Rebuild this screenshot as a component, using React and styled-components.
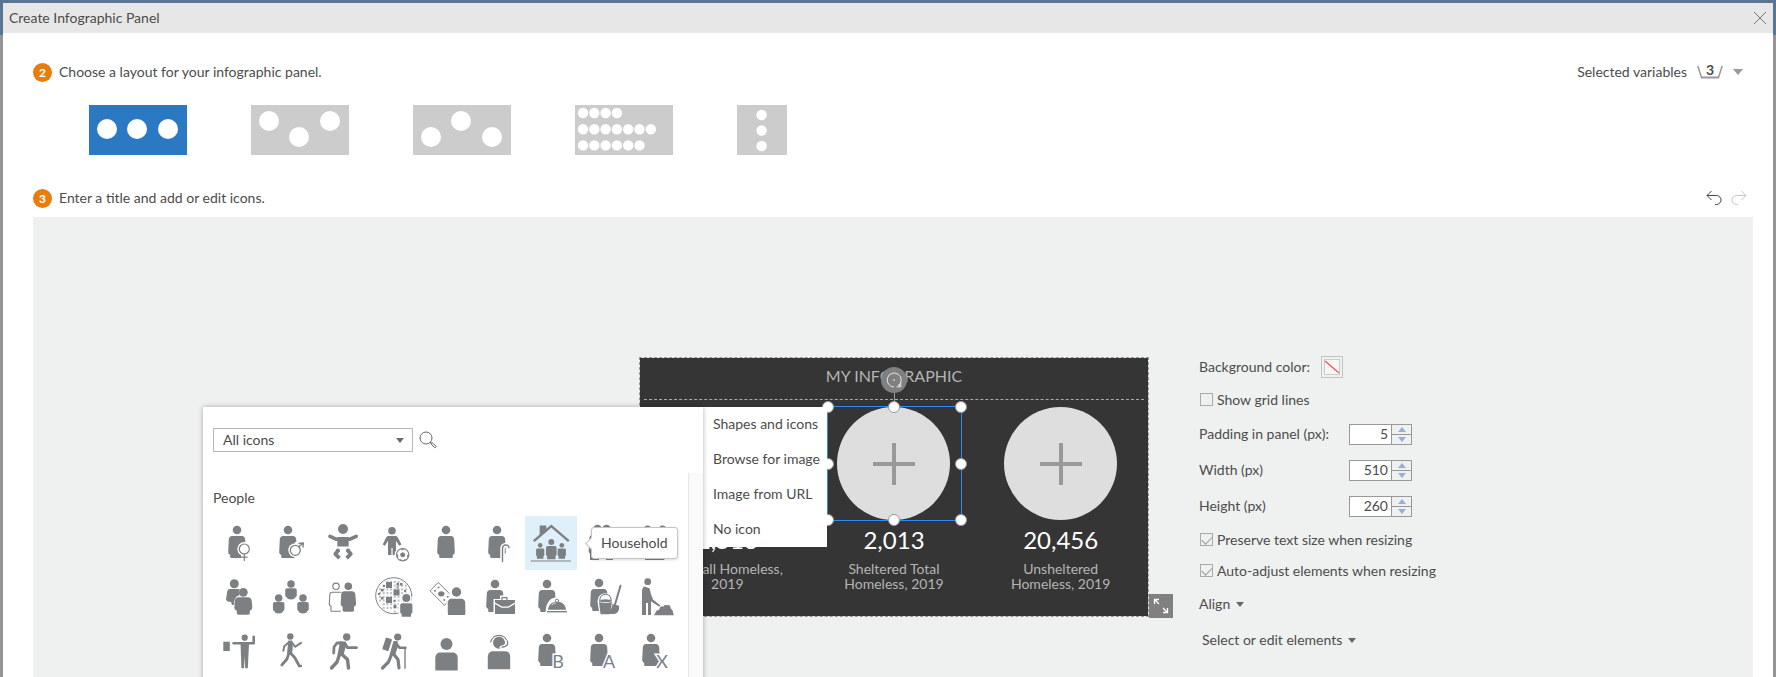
import React, { useState } from "react";
import styled, { createGlobalStyle, css } from "styled-components";

const layouts = [
  { id: "row", name: "Row", width: 98, r: 10, dots: [[18, 24], [48, 24], [79, 24]] },
  { id: "down", name: "Middle down", width: 98, r: 10, dots: [[18, 16], [48, 32], [79, 16]] },
  { id: "up", name: "Middle up", width: 98, r: 10, dots: [[18, 32], [48, 16], [79, 32]] },
  {
    id: "bars",
    name: "Bars",
    width: 98,
    r: 5.2,
    dots: [4, 7, 6].flatMap((n, row) =>
      Array.from({ length: n }, (_, i) => [8 + i * 11.3, 8 + row * 16.2])
    ),
  },
  { id: "column", name: "Column", width: 50, r: 5.2, dots: [[24.6, 10], [24.6, 25.5], [24.6, 41]] },
];

const stats = [
  { value: "2,513", label: "Overall Homeless, 2019" },
  { value: "2,013", label: "Sheltered Total Homeless, 2019", selected: true },
  { value: "20,456", label: "Unsheltered Homeless, 2019" },
];

const handles = [
  [0, 0], [50, 0], [100, 0],
  [0, 50], [100, 50],
  [0, 100], [50, 100], [100, 100],
];

// ---- people icons, each on a 52 x 54 cell ----

const Adult = ({ x = 25, y = 14 }) => (
  <g transform={`translate(${x} ${y})`}>
    <circle r="4.3" />
    <path d="M-5 6h10c1.900 0 3 1.500 3.200 3.300l.6 12.700c0 1.600-.7 2.500-2 2.700V27c0 .7-.5 1-1.200 1h-11.200c-.7 0-1.200-.3-1.200-1v-2.300c-1.300-.2-2-1.100-2-2.700l.6-12.700C-8 7.500-6.900 6-5 6z" />
  </g>
);

const Bust = ({ x, y, s = 1 }) => (
  <g transform={`translate(${x} ${y}) scale(${s})`}>
    <circle r="3.9" />
    <path d="M-4 4.400h8c1.200 0 2 .8 2 2v5c0 1.300-.6 2-1.500 2.500-.6 1.500-2 2.300-4.500 2.300s-3.900-.8-4.500-2.300c-.9-.5-1.500-1.200-1.500-2.500v-5c0-1.200.8-2 2-2z" />
  </g>
);

const Small = ({ x, y, s = 1 }) => (
  <g transform={`translate(${x} ${y}) scale(${s})`}>
    <circle r="3" />
    <path d="M-3.500 4h7c1.200 0 1.800.8 1.800 2v6.500c0 .8-.4 1.300-1.100 1.500v3.300h-8.400V14c-.7-.2-1.100-.7-1.100-1.500V6c0-1.200.6-2 1.800-2z" />
  </g>
);

const Worker = ({ x, y, s = 1 }) => (
  <g transform={`translate(${x} ${y}) scale(${s})`}>
    <circle r="6" />
    <path d="M-6 8.500H6c3.500 0 5.200 2.500 5.200 5.500v12.500h-22.400V14c0-3 1.700-5.500 5.200-5.500z" />
  </g>
);

const Letter = ({ children, x }) => (
  <text
    x={x}
    y="44"
    fontSize="18"
    textAnchor="middle"
    stroke="#fff"
    strokeWidth="3"
    paintOrder="stroke"
  >
    {children}
  </text>
);

const line = { fill: "none", stroke: "currentColor", strokeLinecap: "round", strokeLinejoin: "round" };
const halo = { fill: "#fff", stroke: "#fff", strokeWidth: 3, strokeLinejoin: "round" };

const diversity = [
  [18, 12, 6], [25.500, 19.500, 6], [18, 27, 6], [28.500, 13, 2.500], [32, 13, 2.500], [28.500, 16.500, 2],
  [13, 19, 2.500], [10, 23, 2], [13, 27, 2.500], [25.500, 30, 2], [25.500, 35, 3], [36, 20, 2], [15, 15, 2],
];
const mesh = [];
for (let gx = 10; gx < 40; gx += 3.700) {
  for (let gy = 11; gy < 42; gy += 3.700) {
    if (Math.hypot(gx + 1 - 24.700, gy + 1 - 25.700) < 16) mesh.push([gx, gy]);
  }
}

const icons = [
  {
    name: "Female",
    art: (
      <>
        <Adult x={24} />
        <circle cx="31.3" cy="33" r="7" fill="#fff" />
        <path d="M28 36h7v10h-7z" fill="#fff" />
        <g {...line} strokeWidth="1.2">
          <circle cx="31.3" cy="33" r="5" />
          <path d="M31.300 38v6.500M28.500 41.200h5.600" />
        </g>
      </>
    ),
  },
  {
    name: "Male",
    art: (
      <>
        <Adult x={23} />
        <circle cx="30.3" cy="34.3" r="7" fill="#fff" />
        <path d="M30 26h6v10h-6z" fill="#fff" />
        <g {...line} strokeWidth="1.3">
          <circle cx="30.3" cy="34.3" r="5" />
          <path d="M34 30.700l4-3.500M34 27.500l4.400-.6-.4 4.300" />
        </g>
      </>
    ),
  },
  {
    name: "Infant",
    art: (
      <>
        <circle cx="26" cy="13" r="5" />
        <path d="M20.300 21h11.400v9.500H20.300z" />
        <path d="M13 20.300l6.500 3h13l6.700-3" {...line} strokeWidth="3.600" />
        <path d="M21.500 34l-3.200 4 4.200 4.200M30.500 34l3.300 4-4.200 4.200" {...line} strokeWidth="3.800" strokeLinecap="butt" />
        <circle cx="21" cy="34.500" r="2" />
        <circle cx="31" cy="34.500" r="2" />
      </>
    ),
  },
  {
    name: "Child",
    art: (
      <>
        <circle cx="23" cy="14.700" r="3.800" />
        <path d="M19.500 20h7c1 0 1.800.5 2.300 1.500l3.700 7-2.300 1.300-3.200-5V39h-3.400v-7h-1.200v7H19V24.800l-3 5-2.300-1.300 3.500-7c.5-1 1.300-1.500 2.300-1.500z" />
        <circle cx="33.700" cy="38.700" r="8" fill="#fff" />
        <circle cx="33.700" cy="38.700" r="6.200" {...line} strokeWidth="1.200" />
        <path d="M33.700 36l2.700 2-1 3.100h-3.400l-1-3.100z" />
        <path d="M31 32.800l2.700 1.400 2.700-1.400zM27.700 37.500l1.800 2.200-1 2.700zM39.700 37.500l-1.800 2.200 1 2.700zM30 44l2.300-1 .7 1.900zM37.400 44l-2.300-1-.7 1.900z" />
      </>
    ),
  },
  { name: "Adult", art: <Adult x={25} /> },
  {
    name: "Senior",
    art: (
      <>
        <Adult x={24} />
        <path d="M29.500 46V32.500c0-4.500 6.500-4.500 6.500-.5" {...line} stroke="#fff" strokeWidth="4.500" />
        <path d="M29.500 45.500V32.500c0-4.500 6.500-4.500 6.500-.7" {...line} strokeWidth="1.400" />
      </>
    ),
  },
  {
    name: "Household",
    art: (
      <>
        <path d="M14.700 9.500h6.600v5.200l-6.600 5.800z" />
        <path d="M8.800 25.200L26.300 10l17.500 15.200" {...line} strokeWidth="2.400" strokeLinecap="butt" strokeLinejoin="miter" />
        <Small x={15.200} y={29.300} s={0.780} />
        <Small x={36.800} y={29.300} s={0.780} />
        <Small x={26.300} y={26} />
        <path d="M5.700 44.500h40.300v1.100H5.700z" />
      </>
    ),
  },
  {
    name: "Couple",
    art: (
      <>
        <Adult x={20.500} y={13} />
        <Adult x={29.500} y={13} />
        <path d="M13 36h9v8h-9zM29 36h7v8h-7z" />
      </>
    ),
  },
  {
    name: "Pair",
    art: (
      <>
        <Small x={18.500} y={13} s={1.200} />
        <Small x={33.500} y={13} s={1.200} />
        <path d="M16 42.800h19.300v1.200H16z" />
      </>
    ),
  },
  {
    name: "Adults",
    art: (
      <>
        <circle cx="21.300" cy="13.700" r="4.500" />
        <path d="M17 19h9c2 0 3 1 3 3l-6 13h-4l-1-3c-3 0-5-1-5-3l1-6c.3-2.500 1-4 3-4z" />
        <g transform="translate(30.300 22.300)">
          <path d="M0-5.500a5 5 0 0 1 4 8.500c4 0 6 3 6 7l-1 12h-16l-2.500-6c0-8 1-12 6-13A5.500 5.500 0 0 1 0-5.500z" fill="#fff" />
          <circle r="4.400" />
          <path d="M-4.500 5h9c2.500 0 3.700 1.500 4 4l.5 6c0 2-1 3-2.500 3.200V21c0 1-.6 1.400-1.500 1.400H-5c-.9 0-1.500-.4-1.500-1.400v-2.800C-8 18-9 17-9 15l.5-6c.3-2.500 1.500-4 4-4z" />
        </g>
      </>
    ),
  },
  {
    name: "Group",
    art: (
      <>
        <Bust x={26} y={14} s={0.960} />
        <Bust x={13.700} y={27.900} s={0.960} />
        <Bust x={38} y={27.900} s={0.960} />
      </>
    ),
  },
  {
    name: "Partners",
    art: (
      <>
        <circle cx="19" cy="16.300" r="3.200" {...line} strokeWidth="1.200" />
        <path d="M24 22.300h-9c-1.500 0-2 1-2.200 2.500l-.5 9c0 1.500.5 2.200 1.700 2.200v5.300h9.500" {...line} strokeWidth="1.100" />
        <circle cx="31.300" cy="16.300" r="3.800" />
        <path d="M27.500 21.300H35c2 0 3 1 3.300 3l.8 9c0 2-.6 3-2.100 3.200V40c0 1-.5 1.700-1.500 1.700h-8.400c-1 0-1.500-.7-1.500-1.700v-3.500c-1.300-.2-1.900-1.200-1.900-3.200l.5-9c.2-2 1.300-3 3.300-3z" />
      </>
    ),
  },
  {
    name: "Diversity",
    art: (
      <>
        <circle cx="24.700" cy="25.700" r="18" {...line} strokeWidth="1" />
        {mesh.map(([x, y]) => (
          <rect key={`${x} ${y}`} x={x} y={y} width="2" height="2" opacity="0.500" />
        ))}
        {diversity.map(([x, y, s]) => (
          <rect key={`${x} ${y}`} x={x - 1} y={y} width={s} height={s} />
        ))}
        <path d="M37.300 22.500c3 0 5.500 2.500 5.500 5.500 0 1.500-.4 2.500-1 3.500l3.500 3V48H29.500V34l3.300-2.500c-2.500-4 .5-9 4.500-9z" fill="#fff" />
        <circle cx="37.300" cy="28" r="4" />
        <path d="M33.500 33.300h7.600c1.500 0 2.300.8 2.300 2.300V42c0 1-.6 1.500-1.400 1.700v3h-9.400v-3c-.8-.2-1.400-.7-1.400-1.700v-6.400c0-1.500.8-2.300 2.300-2.300z" />
      </>
    ),
  },
  {
    name: "Income",
    art: (
      <>
        <path d="M17.300 12.500L9 20.800l14.500 14.500 8.300-8.300z" {...line} strokeWidth="1" strokeDasharray="3 .6" />
        <ellipse cx="20.300" cy="23.800" rx="3.200" ry="2.600" />
        <circle cx="14" cy="20.800" r="1" />
        <circle cx="17.500" cy="17.500" r="1" />
        <circle cx="23.200" cy="30" r="1" />
        <circle cx="26.700" cy="26.700" r="1" />
        <path d="M35.300 15c4 0 7 3 7 6.700 0 8-3 6-7 6l-10 20V33l5-4c-4-7-1-14 5-14z" fill="#fff" />
        <Worker x={35.500} y={22} s={0.780} />
        <path d="M27 40h17.200v5H27z" />
      </>
    ),
  },
  {
    name: "Employee",
    art: (
      <>
        <Adult x={22} y={14} />
        <path d="M20.500 29h23v17h-23zM27 25.500h9v6h-9z" fill="#fff" />
        <path d="M29 30v-2.300h5V30" {...line} strokeWidth="1.200" />
        <path d="M22 30h20v2.500l-7 4h-6l-7-4z" />
        <path d="M22 34l6.500 3.700h7L42 34v10H22z" />
      </>
    ),
  },
  {
    name: "Hospitality",
    art: (
      <>
        <Adult x={22} y={14} />
        <path d="M20.500 44c0-11 4-16.500 11.500-16.500S43 33 43 44z" fill="#fff" />
        <path d="M23 39.700c.5-5 3.500-8 9-8s8.500 3 9 8z" />
        <circle cx="32" cy="30.800" r="1.700" {...line} strokeWidth="1" />
        <path d="M27 35c1-1.300 2-1.800 3.500-2" {...line} stroke="#fff" strokeWidth=".8" />
        <path d="M22 41h20v1.400H22z" />
      </>
    ),
  },
  {
    name: "Cleaning",
    art: (
      <>
        <Adult x={22} y={13} />
        <path d="M22 31.500c0-9 12.500-9 12.500 0L33 44h-9z" {...halo} />
        <path d="M37.800 35L44 15.800" {...line} stroke="#fff" strokeWidth="4" />
        <path d="M22 31.500l1.500 12.700h8.500l1.500-3 1.500-9.700c-4 2-9 2-13 0z" />
        <path d="M22.700 31c0-9 11.500-9 11.500 0" {...line} strokeWidth="1.200" />
        <ellipse cx="28.500" cy="30.800" rx="5.500" ry="1.500" />
        <path d="M38 34.500l5.500-18.700" {...line} strokeWidth="2" />
        <path d="M35.500 34l6.500 1.700c.8 4.300-1.500 8.300-5 8.300h-8c4-1.500 5.500-5 6.500-10z" />
      </>
    ),
  },
  {
    name: "Laborer",
    art: (
      <>
        <circle cx="18.700" cy="11.700" r="3.400" />
        <path d="M15 16.500l5.500 1.700 1.500 6 2 5.300 7.200 5.800-1 1.500-8.200-5.500V45h-3V33h-2v12h-4V22c0-2.500.3-4 2-5.500z" />
        <path d="M25 45.300l2.500-4.500 2.500-1 1.500-3.300h3l1.200-1.500 5 .3 1.300 3.500 1.500 1.500 1.300 5z" />
      </>
    ),
  },
  {
    name: "Voter",
    art: (
      <>
        <path d="M10.300 17.700h6.500V27h-6.500z" />
        <circle cx="31.700" cy="13.700" r="3.100" />
        <path d="M20.500 19.300h20.200v-6.500" {...line} strokeWidth="2.600" />
        <path d="M27.500 18.500h8.600L34.800 44.300h-2.600l-.6-12-.6 12h-2.600z" />
      </>
    ),
  },
  {
    name: "Walking",
    art: (
      <>
        <circle cx="25.300" cy="12.500" r="3.200" />
        <path d="M23.300 16.500h4l.5 7-.8 6.500h-5z" />
        <path d="M23.500 18.500l-4.200 3.800-1 4.500M27 18.500l3 4.300 6-4" {...line} strokeWidth="2" />
        <path d="M24 29l-2 6-5.200 6M25.500 29l4.500 5 4.300 8h1.500" {...line} strokeWidth="2.700" />
      </>
    ),
  },
  {
    name: "Running",
    art: (
      <>
        <circle cx="29.700" cy="13" r="3.700" />
        <path d="M23 17.500h5.500l.5 4-2.500 9.500h-6z" />
        <path d="M25 19h-5l-3 4-.3 6M28 19.500l2.500 4.200h9" {...line} strokeWidth="2.800" />
        <path d="M22.500 30.500L20 38l-5.500 6M24.500 30l6 5.500 1 8.500" {...line} strokeWidth="3.400" />
      </>
    ),
  },
  {
    name: "Hiking",
    art: (
      <>
        <circle cx="28.700" cy="13" r="3.600" />
        <rect x="15" y="14" width="6.500" height="12.500" rx="1" transform="rotate(18 18 20)" />
        <path d="M24.500 17h4l.7 4.500-3 9.500h-5.700z" />
        <path d="M27.500 19.500l3 4.300h6" {...line} strokeWidth="2.500" />
        <path d="M22.500 30.500L19.500 38 13.500 44M24.500 30l4.500 5.500 1 8.500" {...line} strokeWidth="3.200" />
        <path d="M36 23.500v20.800" {...line} strokeWidth="1.400" />
      </>
    ),
  },
  { name: "Person", art: <Worker x={25.500} y={20} /> },
  {
    name: "Support",
    art: (
      <>
        <Worker x={26} y={18.800} />
        <path d="M17.700 18a8.500 8.500 0 0 1 16.600 0" {...line} strokeWidth="1.200" />
        <path d="M34.500 17v4l-6.500 2.500" {...line} stroke="#fff" strokeWidth="3" />
        <path d="M34.500 17v3.500c-1 1.800-3 2.500-5.500 2.700" {...line} strokeWidth="1.300" />
      </>
    ),
  },
  { name: "Type B", art: <><Adult x={22} /><Letter x={33}>B</Letter></> },
  { name: "Type A", art: <><Adult x={22} /><Letter x={32}>A</Letter></> },
  { name: "Type X", art: <><Adult x={22} /><Letter x={33}>X</Letter></> },
];

const NumberField = ({ id, label, value }) => (
  <Row $height={36}>
    <FieldLabel htmlFor={id}>{label}</FieldLabel>
    <Stepper>
      <StepperInput id={id} type="text" defaultValue={value} />
      <StepperButtons>
        <StepButton type="button" aria-label="Increase">
          <Caret $up $size={4} $color="#9aaed6" />
        </StepButton>
        <StepButton type="button" aria-label="Decrease">
          <Caret $size={4} $color="#9aaed6" />
        </StepButton>
      </StepperButtons>
    </Stepper>
  </Row>
);

const Check = ({ children, height, checked }) => (
  <Row $height={height}>
    <CheckLabel>
      <CheckInput type="checkbox" defaultChecked={checked} />
      {children}
    </CheckLabel>
  </Row>
);

const Selection = () => (
  <SelectionBox>
    <RotateStem />
    <RotateHandle type="button" aria-label="Rotate">
      <svg width="26" height="26" viewBox="0 0 26 26" fill="none" stroke="#e6e6e6">
        <path d="M17.500 18.500a7 7 0 1 0-4.500 1.500" />
        <path d="M19.800 15.500v4.300h-4.300M19.800 19.800l-2.300-2.300" />
        <circle cx="13" cy="13" r=".5" />
      </svg>
    </RotateHandle>
    {handles.map(([x, y]) => (
      <Handle key={`${x}-${y}`} $x={x} $y={y} />
    ))}
  </SelectionBox>
);

const IconPicker = () => (
  <Picker>
    <PickerHead>
      <PickerSelectWrap>
        <PickerSelect aria-label="Icon category" defaultValue="all">
          <option value="all">All icons</option>
          <option value="people">People</option>
        </PickerSelect>
        <Caret $size={4} $color="#6b6b6b" />
      </PickerSelectWrap>
      <IconButton type="button" aria-label="Search">
        <svg width="18" height="18" viewBox="0 0 18 18" fill="none" stroke="#666">
          <circle cx="7" cy="7" r="6" />
          <path d="M11 11l1.500 1.500M13 11.500l4 3.700c.6.600-.8 2-1.500 1.400l-3.700-4z" />
        </svg>
      </IconButton>
    </PickerHead>
    <PickerBody>
      <PickerList>
        <GroupTitle>People</GroupTitle>
        <IconGrid>
          {icons.map(({ name, art }) => (
            <IconCell key={name} type="button" aria-label={name} $active={name === "Household"}>
              <svg width="52" height="54" viewBox="0 0 52 54" fill="currentColor">
                {art}
              </svg>
              {name === "Household" && <Tooltip>{name}</Tooltip>}
            </IconCell>
          ))}
        </IconGrid>
      </PickerList>
      <ScrollTrack />
    </PickerBody>
  </Picker>
);

const App = () => {
  const [layout, setLayout] = useState("row");

  return (
    <Backdrop>
      <GlobalStyle />
      <Dialog role="dialog" aria-label="Create Infographic Panel">
        <TitleBar>
          <DialogTitle>Create Infographic Panel</DialogTitle>
          <IconButton type="button" aria-label="Close">
            <svg width="14" height="14" viewBox="0 0 14 14" stroke="#777" fill="none">
              <path d="M1 1l12 12M13 1L1 13" />
            </svg>
          </IconButton>
        </TitleBar>
        <Content>
          <StepHead>
            <Badge>2</Badge>
            <StepText>Choose a layout for your infographic panel.</StepText>
            <Variables type="button">
              Selected variables
              <Basket>
                <svg width="26" height="14" viewBox="0 0 26 14" fill="none" stroke="#999">
                  <path d="M.8 1l3.700 11.500M25.200 1l-3.700 11.500" strokeWidth="1.500" />
                  <path d="M4 12.500h18" strokeWidth="2" />
                </svg>
                <Count>3</Count>
              </Basket>
              <Caret $size={5} $color="#999" />
            </Variables>
          </StepHead>
          <Layouts>
            {layouts.map(({ id, name, width, r, dots }) => (
              <LayoutButton
                key={id}
                type="button"
                aria-label={name}
                $active={id === layout}
                onClick={() => setLayout(id)}
              >
                <svg width={width} height="50" fill="#fff">
                  {dots.map(([x, y]) => (
                    <circle key={`${x}-${y}`} cx={x} cy={y} r={r} />
                  ))}
                </svg>
              </LayoutButton>
            ))}
          </Layouts>
          <StepHead>
            <Badge>3</Badge>
            <StepText>Enter a title and add or edit icons.</StepText>
            <History>
              <IconButton type="button" aria-label="Undo">
                <svg width="16" height="16" viewBox="0 0 16 16" fill="none" stroke="#444">
                  <path d="M5.500 1L1 5.500 5.500 10M1 5.500h9.500a4.500 4.500 0 0 1 0 9H9" />
                </svg>
              </IconButton>
              <IconButton type="button" aria-label="Redo">
                <svg width="16" height="16" viewBox="0 0 16 16" fill="none" stroke="#c4c4c4">
                  <path d="M10.500 1L15 5.500 10.500 10M15 5.500H5.500a4.500 4.500 0 0 0 0 9H7" />
                </svg>
              </IconButton>
            </History>
          </StepHead>
          <Canvas>
            <Infographic>
              <InfographicTitle>MY INFOGRAPHIC</InfographicTitle>
              <Stats>
                {stats.map(({ value, label, selected }) => (
                  <Stat key={label}>
                    <Placeholder type="button" aria-label="Add icon">
                      <svg width="42" height="42" viewBox="0 0 42 42">
                        <path d="M21 0v42M0 21h42" stroke="#999" strokeWidth="4" />
                      </svg>
                    </Placeholder>
                    <Value>{value}</Value>
                    <Label>{label}</Label>
                    {selected && <Selection />}
                  </Stat>
                ))}
              </Stats>
              <ResizeButton type="button" aria-label="Resize">
                <svg width="24" height="24" viewBox="0 0 24 24" fill="none" stroke="#fff" strokeWidth="1.300">
                  <path d="M5.500 10V5.500H10M5.500 5.500L10 10M18.500 14v4.500H14M18.500 18.500L14 14" />
                </svg>
              </ResizeButton>
              <Popups>
                <IconPicker />
                <Menu>
                  <MenuItem type="button">Shapes and icons</MenuItem>
                  <MenuItem type="button">Browse for image</MenuItem>
                  <MenuItem type="button">Image from URL</MenuItem>
                  <MenuItem type="button">No icon</MenuItem>
                </Menu>
              </Popups>
            </Infographic>
            <Settings>
              <Row $height={33}>
                Background color:
                <Swatch type="button" aria-label="Background color">
                  <svg width="16" height="16" viewBox="0 0 16 16" fill="none">
                    <rect x=".5" y=".5" width="15" height="15" stroke="#ccc" fill="#f7f7f7" />
                    <path d="M1 2l14 12" stroke="#f0525f" strokeWidth="1.300" />
                  </svg>
                </Swatch>
              </Row>
              <Check height={33}>Show grid lines</Check>
              <NumberField id="padding" label="Padding in panel (px):" value="5" />
              <NumberField id="width" label="Width (px)" value="510" />
              <NumberField id="height" label="Height (px)" value="260" />
              <Check height={31} checked>Preserve text size when resizing</Check>
              <Check height={31} checked>Auto-adjust elements when resizing</Check>
              <Row $height={36}>
                <DropButton type="button">
                  Align <Caret $size={4} $color="#666" />
                </DropButton>
              </Row>
              <Row $height={36} $indent>
                <DropButton type="button">
                  Select or edit elements <Caret $size={4} $color="#666" />
                </DropButton>
              </Row>
            </Settings>
          </Canvas>
        </Content>
      </Dialog>
    </Backdrop>
  );
};

export default App;

const GlobalStyle = createGlobalStyle`
  * {
    box-sizing: border-box;
  }
  body {
    margin: 0;
    font-family: Lato, "Liberation Sans", sans-serif;
    font-size: 14px;
    line-height: 20px;
    color: #4c4c4c;
  }
  button, input, select {
    font: inherit;
    color: inherit;
  }
  button {
    padding: 0;
    border: 0;
    background: none;
    cursor: pointer;
  }
  svg {
    display: block;
  }
`;

const Backdrop = styled.div`
  display: flex;
  height: 100vh;
  overflow: hidden;
  padding: 3px 3px 0;
  background: linear-gradient(#587593 35px, #949494 35px);
`;
const Dialog = styled.div`
  flex: 1;
  min-width: 0;
  display: flex;
  flex-direction: column;
  background: #fff;
`;
const TitleBar = styled.header`
  display: flex;
  align-items: center;
  justify-content: space-between;
  height: 30px;
  padding: 0 6px;
  background: #e7e7e7;
`;
const DialogTitle = styled.h1`
  margin: 0;
  font-size: 14px;
  font-weight: 400;
`;
const IconButton = styled.button`
  display: flex;
`;
const Content = styled.main`
  flex: 1;
  min-height: 0;
  display: flex;
  flex-direction: column;
  padding: 29px 20px 0 30px;
`;
const StepHead = styled.div`
  display: flex;
  align-items: center;
  height: 20px;
`;
const Badge = styled.span`
  width: 19px;
  height: 19px;
  margin-right: 7px;
  border-radius: 50%;
  background: #e87d0d;
  color: #fff;
  font-size: 12px;
  font-weight: 700;
  line-height: 19px;
  text-align: center;
`;
const StepText = styled.h2`
  flex: 1;
  margin: 0;
  font-size: 14px;
  font-weight: 400;
`;
const Caret = styled.span`
  width: 0;
  height: 0;
  border: ${({ $size }) => $size}px solid transparent;
  ${({ $up, $size, $color }) =>
    $up
      ? css`
          border-top: 0;
          border-bottom: ${$size + 1}px solid ${$color};
        `
      : css`
          border-bottom: 0;
          border-top: ${$size + 1}px solid ${$color};
        `}
`;
const Variables = styled.button`
  display: flex;
  align-items: center;
  gap: 10px;
  padding-right: 10px;
`;
const Basket = styled.span`
  display: grid;
  place-items: center;

  & > * {
    grid-area: 1 / 1;
  }
`;
const Count = styled.span`
  padding-bottom: 4px;
  font-weight: 700;
  line-height: 16px;
`;
const Layouts = styled.div`
  display: flex;
  gap: 64px;
  padding: 23px 56px 33px;
`;
const LayoutButton = styled.button`
  background: ${({ $active }) => ($active ? "#2a79c2" : "#ccc")};
`;
const History = styled.div`
  display: flex;
  gap: 9px;
  padding-right: 6px;
`;
const Canvas = styled.section`
  flex: 1;
  min-height: 0;
  display: grid;
  grid-template-columns: 1fr auto 1fr;
  align-items: start;
  margin-top: 9px;
  padding: 133px 0 0 2px;
  background: #eff1f1;
`;
const Infographic = styled.div`
  position: relative;
  grid-column: 2;
  width: 510px;
  min-height: 260px;
  margin-top: 7px;
  padding: 0 4px;
  border: 1px dashed #999;
  background: #353535;
  background-clip: padding-box;
`;
const InfographicTitle = styled.h3`
  margin: 0;
  padding: 8px 0 13px;
  border-bottom: 1px dashed #aaa;
  color: #b4b4b4;
  font-size: 16px;
  font-weight: 400;
  text-align: center;
`;
const Stats = styled.div`
  display: grid;
  grid-template-columns: repeat(3, 1fr);
  padding-top: 7px;
`;
const Stat = styled.div`
  position: relative;
  display: flex;
  flex-direction: column;
  align-items: center;
  text-align: center;
`;
const Placeholder = styled.button`
  display: grid;
  place-items: center;
  width: 113px;
  height: 113px;
  border-radius: 50%;
  background: #dedede;
`;
const Value = styled.div`
  padding: 5px 0 6px;
  color: #fff;
  font-size: 24px;
  line-height: 30px;
`;
const Label = styled.div`
  width: 120px;
  color: #b4b4b4;
  line-height: 15px;
`;
const SelectionBox = styled.div`
  position: absolute;
  top: -1px;
  left: 50%;
  width: 135px;
  height: 115px;
  margin-left: -67px;
  border: 1px solid #3089f5;
  pointer-events: none;
`;
const Handle = styled.span`
  position: absolute;
  left: ${({ $x }) => $x}%;
  top: ${({ $y }) => $y}%;
  width: 12px;
  height: 12px;
  border: 1px solid #999;
  border-radius: 50%;
  background: #fff;
  transform: translate(-50%, -50%);
`;
const RotateStem = styled.span`
  position: absolute;
  left: 50%;
  bottom: 100%;
  width: 1px;
  height: 15px;
  background: #999;
`;
const RotateHandle = styled.button`
  position: absolute;
  left: 50%;
  top: -40px;
  margin-left: -13px;
  border-radius: 50%;
  background: #808080;
`;
const ResizeButton = styled.button`
  position: absolute;
  left: 100%;
  bottom: -2px;
  margin-left: 1px;
  background: #808080;
`;
const Popups = styled.div`
  position: absolute;
  top: 49px;
  right: 321px;
  display: flex;
  align-items: flex-start;
`;
const Picker = styled.div`
  position: relative;
  z-index: 2;
  width: 500px;
  background: #fff;
  box-shadow: 0 0 5px rgba(0, 0, 0, 0.3);
`;
const PickerHead = styled.div`
  display: flex;
  align-items: center;
  gap: 6px;
  padding: 21px 10px;
`;
const PickerSelectWrap = styled.div`
  display: grid;
  grid-template-columns: 1fr 16px;
  align-items: center;
  width: 200px;
  border: 1px solid #b8b8b8;

  & > * {
    grid-row: 1;
  }
  & > span {
    grid-column: 2;
    pointer-events: none;
  }
`;
const PickerSelect = styled.select`
  grid-column: 1 / 3;
  height: 22px;
  padding: 0 9px;
  border: 0;
  background: transparent;
  appearance: none;
`;
const PickerBody = styled.div`
  display: flex;
`;
const PickerList = styled.div`
  flex: 1;
  padding: 15px 6px 40px 10px;
`;
const ScrollTrack = styled.div`
  width: 15px;
  border-left: 1px solid #e6e6e6;
  background: #fafafa;
`;
const GroupTitle = styled.h4`
  margin: 0 0 8px;
  font-size: 14px;
  font-weight: 400;
`;
const IconGrid = styled.div`
  display: grid;
  grid-template-columns: repeat(9, 52px);
`;
const IconCell = styled.button`
  position: relative;
  color: #7d8083;
  background: ${({ $active }) => ($active ? "#dff0fb" : "none")};
`;
const Tooltip = styled.span`
  position: absolute;
  z-index: 1;
  top: 11px;
  left: 66px;
  padding: 5px 9px;
  border: 1px solid #c4c4c4;
  border-radius: 3px;
  background: #fff;
  color: #4c4c4c;
  box-shadow: 0 1px 3px rgba(0, 0, 0, 0.15);

  &::before {
    content: "";
    position: absolute;
    top: 11px;
    left: -5px;
    width: 8px;
    height: 8px;
    border: 1px solid #c4c4c4;
    border-width: 0 0 1px 1px;
    background: #fff;
    transform: rotate(45deg);
  }
`;
const Menu = styled.div`
  display: flex;
  flex-direction: column;
  width: 124px;
  background: #fff;
  z-index: 1;
`;
const MenuItem = styled.button`
  height: 35px;
  padding: 0 0 2px 10px;
  text-align: left;
  white-space: nowrap;
`;
const Settings = styled.div`
  padding-left: 50px;
`;
const Row = styled.div`
  display: flex;
  align-items: center;
  height: ${({ $height }) => $height}px;
  padding-left: ${({ $indent }) => ($indent ? 3 : 0)}px;
`;
const Swatch = styled.button`
  margin-left: 11px;
  padding: 2px;
  border: 1px solid #c4c4c4;
`;
const FieldLabel = styled.label`
  width: 150px;
`;
const Stepper = styled.div`
  display: flex;
  border: 1px solid #999;
`;
const StepperInput = styled.input`
  width: 41px;
  height: 19px;
  padding: 0 3px;
  border: 0;
  background: #fff;
  text-align: right;
`;
const StepperButtons = styled.div`
  display: flex;
  flex-direction: column;
  width: 20px;
  border-left: 1px solid #999;
`;
const StepButton = styled.button`
  flex: 1;
  display: grid;
  place-items: center;

  & + & {
    border-top: 1px solid #999;
  }
`;
const CheckLabel = styled.label`
  display: flex;
  align-items: center;
  gap: 4px;
`;
const CheckInput = styled.input`
  width: 13px;
  height: 13px;
  margin: 0 0 0 1px;
  border: 1px solid #aaa;
  appearance: none;
  display: grid;
  place-items: center;

  &:checked::before {
    content: "";
    width: 9px;
    height: 5px;
    border: solid #999;
    border-width: 0 0 1px 1px;
    transform: translateY(-1px) rotate(-45deg);
  }
`;
const DropButton = styled.button`
  display: flex;
  align-items: center;
  gap: 6px;
`;
